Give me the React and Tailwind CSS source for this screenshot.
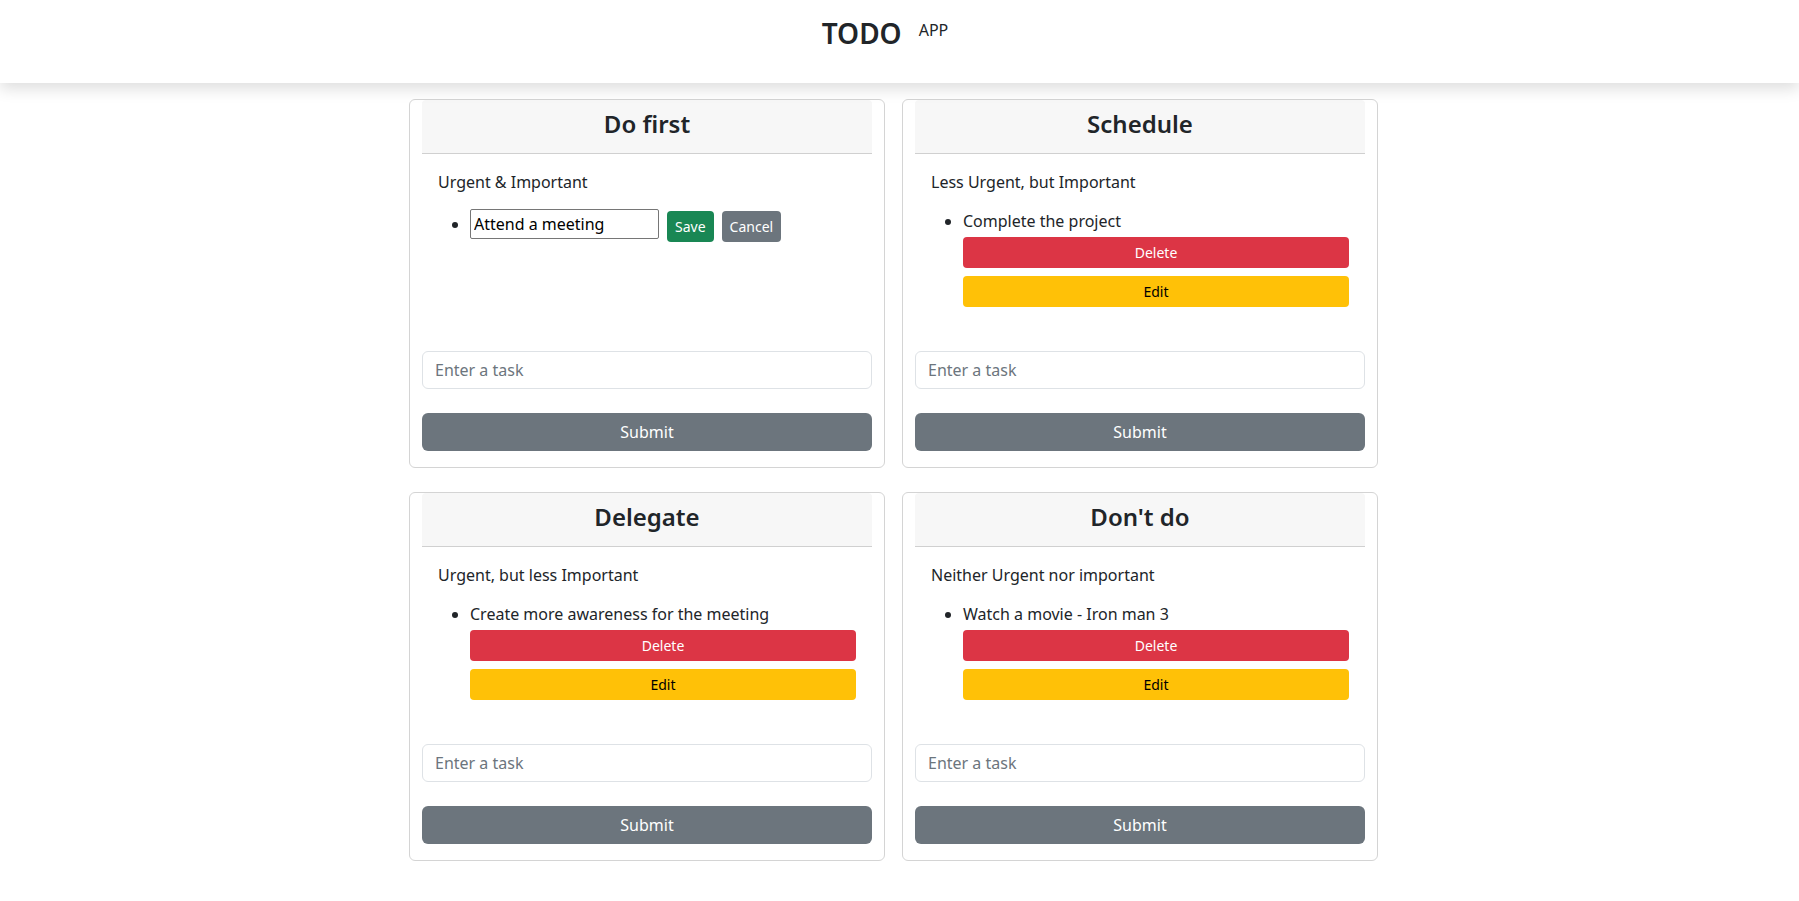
import React from "react";

const quadrants = [
  {
    id: 1,
    title: "Do first",
    subtitle: "Urgent & Important",
    tasks: [{ id: 1, text: "Attend a meeting", editing: true }],
  },
  {
    id: 2,
    title: "Schedule",
    subtitle: "Less Urgent, but Important",
    tasks: [{ id: 2, text: "Complete the project" }],
  },
  {
    id: 3,
    title: "Delegate",
    subtitle: "Urgent, but less Important",
    tasks: [{ id: 3, text: "Create more awareness for the meeting" }],
  },
  {
    id: 4,
    title: "Don't do",
    subtitle: "Neither Urgent nor important",
    tasks: [{ id: 4, text: "Watch a movie - Iron man 3" }],
  },
];

const TaskItem = ({ task }) => {
  if (task.editing) {
    return (
      <li className="leading-6">
        <span className="inline-flex items-start gap-2">
          <input
            defaultValue={task.text}
            className="w-[189px] h-[30px] border border-[#767676] rounded-[2px] px-[3px] text-[16px] text-black outline-none"
          />
          <button className="mt-[2px] h-[31px] px-2 rounded-[4px] bg-[#198754] text-white text-[14px] leading-none">
            Save
          </button>
          <button className="mt-[2px] h-[31px] px-2 rounded-[4px] bg-[#6c757d] text-white text-[14px] leading-none">
            Cancel
          </button>
        </span>
      </li>
    );
  }

  return (
    <li className="leading-6">
      {task.text}
      <div className="mt-1 flex flex-col gap-2">
        <button className="w-full h-[31px] rounded-[4px] bg-[#dc3545] text-white text-[14px]">Delete</button>
        <button className="w-full h-[31px] rounded-[4px] bg-[#ffc107] text-black text-[14px]">Edit</button>
      </div>
    </li>
  );
};

const QuadrantCard = ({ quadrant }) => (
  <div className="flex flex-col border border-[#d4d4d4] rounded-md px-3 pb-4 bg-white">
    <div className="h-[54px] bg-[#f7f7f7] border-b border-[#d0d0d0] rounded-t-sm flex items-center justify-center">
      <h2 className="text-[24px] font-semibold leading-none pb-[6px]">{quadrant.title}</h2>
    </div>
    <div className="px-4 pt-4 pb-[44px]">
      <p className="leading-6 mb-[15px]">{quadrant.subtitle}</p>
      <ul className="list-disc pl-8">
        {quadrant.tasks.map((task) => (
          <TaskItem key={task.id} task={task} />
        ))}
      </ul>
    </div>
    <div className="mt-auto flex flex-col">
      <input
        placeholder="Enter a task"
        className="h-[38px] w-full border border-[#dee2e6] rounded-md px-3 text-[16px] placeholder:text-[#6c757d] outline-none"
      />
      <button className="mt-6 h-[38px] w-full rounded-md bg-[#6c757d] text-white text-[16px]">Submit</button>
    </div>
  </div>
);

export default function App() {
  return (
    <div className="min-h-screen bg-white text-[#212529] text-[16px] font-['Noto_Sans',sans-serif]">
      <header className="relative z-10 h-[83px] bg-white shadow-[0_6px_14px_rgba(0,0,0,0.13)]">
        <div className="flex justify-center items-start pt-[19px] pr-[29px]">
          <h1 className="text-[28px] font-semibold leading-none">TODO</h1>
          <span className="ml-[17px] mt-[3px] text-[16px] leading-none">APP</span>
        </div>
      </header>

      <main className="mx-auto w-[981px] pr-[12px] pt-4 pb-10">
        <div className="grid grid-cols-2 gap-x-[17px] gap-y-6">
          {quadrants.map((q) => (
            <QuadrantCard key={q.id} quadrant={q} />
          ))}
        </div>
      </main>
    </div>
  );
}
